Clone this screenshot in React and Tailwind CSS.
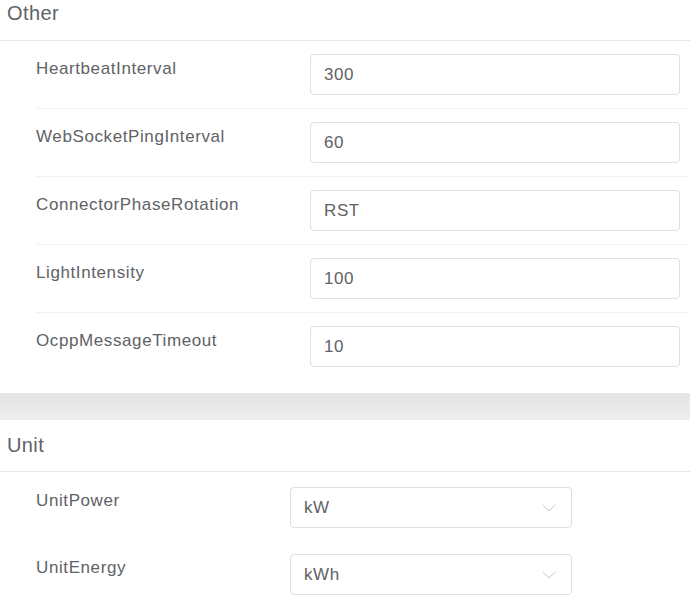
import React from "react";

const otherFields = [
  { label: "HeartbeatInterval", value: "300" },
  { label: "WebSocketPingInterval", value: "60" },
  { label: "ConnectorPhaseRotation", value: "RST" },
  { label: "LightIntensity", value: "100" },
  { label: "OcppMessageTimeout", value: "10" },
];

const unitFields = [
  { label: "UnitPower", value: "kW" },
  { label: "UnitEnergy", value: "kWh" },
];

const Chevron = () => (
  <svg width="14" height="8" viewBox="0 0 14 8" fill="none" className="text-[#c0c4cc]">
    <path d="M0.5 0.8 L7 7 L13.5 0.8" stroke="currentColor" strokeWidth="1" />
  </svg>
);

export default function App() {
  return (
    <div className="w-[690px] h-[608px] overflow-hidden bg-white text-[#606266]" style={{ fontFamily: '"Liberation Sans", Arial, sans-serif' }}>
      {/* Other */}
      <div className="bg-white shadow-[0_2px_6px_rgba(0,0,0,0.05)] h-[393px]">
        <div className="h-[41px] border-b border-[#e4e7ed] pl-[7px]">
          <span className="text-[20px] leading-[27px] tracking-[0.4px] text-[#606266]">Other</span>
        </div>
        <div>
          {otherFields.map((f, i) => (
            <div
              key={f.label}
              className={`ml-[35px] flex pt-[13px] pb-[13px] ${i < otherFields.length - 1 ? "border-b border-[#f2f2f2]" : ""}`}
            >
              <div className="w-[275px] pl-[1px] text-[17px] leading-[30px] tracking-[0.6px]">{f.label}</div>
              <div className="w-[370px] h-[41px] rounded-[4px] border border-[#dcdfe6] flex items-center pl-[13px] text-[17px] tracking-[0.6px] text-[#606266]">
                {f.value}
              </div>
            </div>
          ))}
        </div>
      </div>

      {/* gap */}
      <div className="h-[27px] bg-gradient-to-b from-[#e4e4e4] to-[#eeeeee]"></div>

      {/* Unit */}
      <div className="bg-white">
        <div className="h-[52px] border-b border-[#e4e7ed] pl-[7px] pt-[12px]">
          <span className="text-[20px] leading-[27px] tracking-[0.4px] text-[#606266]">Unit</span>
        </div>
        <div className="pt-[15px]">
          {unitFields.map((f) => (
            <div key={f.label} className="ml-[35px] flex h-[67px]">
              <div className="w-[255px] pl-[1px] text-[17px] leading-[28px] tracking-[0.6px]">{f.label}</div>
              <div className="w-[282px] h-[41px] rounded-[4px] border border-[#dcdfe6] flex items-center justify-between pl-[13px] pr-[15px] text-[17px] tracking-[0.6px] text-[#606266]">
                <span>{f.value}</span>
                <Chevron />
              </div>
            </div>
          ))}
        </div>
      </div>
    </div>
  );
}
